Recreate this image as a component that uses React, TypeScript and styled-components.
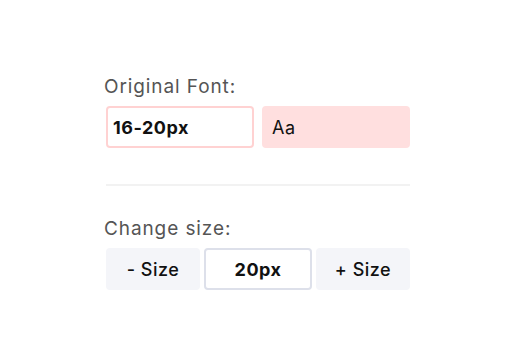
import React from "react";
import styled, { createGlobalStyle } from "styled-components";

const Global = createGlobalStyle`
  html, body { margin: 0; padding: 0; background: #ffffff; }
  body { font-family: "Inter", "Open Sans", sans-serif; }
`;

const Page = styled.div`
  width: 514px;
  height: 362px;
  display: flex;
  justify-content: center;
  align-items: flex-start;
  padding-top: 73px;
  box-sizing: border-box;
`;

const Panel = styled.div`
  width: 304px;
  margin-left: 2px;
  display: flex;
  flex-direction: column;
`;

const Label = styled.div`
  font-size: 19px;
  line-height: 27px;
  letter-spacing: 0.9px;
  color: #555555;
  margin-left: -2px;
  margin-bottom: 6px;
`;

const Row = styled.div`
  display: flex;
  gap: 8px;
`;

const Box = styled.div<{ $variant: "input" | "preview" }>`
  width: 148px;
  height: 42px;
  box-sizing: border-box;
  border-radius: 4px;
  display: flex;
  align-items: center;
  padding: 0 ${(p) => (p.$variant === "input" ? "5px" : "8px")};
  font-size: 18px;
  letter-spacing: 0.5px;
  color: #111111;
  border: 2px solid ${(p) => (p.$variant === "input" ? "#ffd2d2" : "#ffdfdf")};
  background: ${(p) => (p.$variant === "input" ? "#ffffff" : "#ffdfdf")};
  font-weight: ${(p) => (p.$variant === "input" ? 700 : 400)};
`;

const Divider = styled.hr`
  border: none;
  height: 2px;
  background: #f2f2f2;
  margin: 36px 0 29px;
`;

const ButtonRow = styled.div`
  display: flex;
  gap: 4px;
`;

const SizeButton = styled.button`
  width: 94px;
  height: 42px;
  border: none;
  border-radius: 4px;
  background: #f4f5f9;
  font-family: inherit;
  font-size: 18px;
  letter-spacing: 0.5px;
  font-weight: 500;
  color: #111111;
  cursor: pointer;
`;

const SizeValue = styled.div`
  width: 108px;
  height: 42px;
  box-sizing: border-box;
  border: 2px solid #dde0ea;
  border-radius: 4px;
  display: flex;
  align-items: center;
  justify-content: center;
  font-size: 18px;
  letter-spacing: 0.5px;
  font-weight: 700;
  color: #111111;
`;

export default function App() {
  return (
    <>
      <Global />
      <Page>
        <Panel>
          <Label>Original Font:</Label>
          <Row>
            <Box $variant="input">16-20px</Box>
            <Box $variant="preview">Aa</Box>
          </Row>
          <Divider />
          <Label>Change size:</Label>
          <ButtonRow>
            <SizeButton>- Size</SizeButton>
            <SizeValue>20px</SizeValue>
            <SizeButton>+ Size</SizeButton>
          </ButtonRow>
        </Panel>
      </Page>
    </>
  );
}
